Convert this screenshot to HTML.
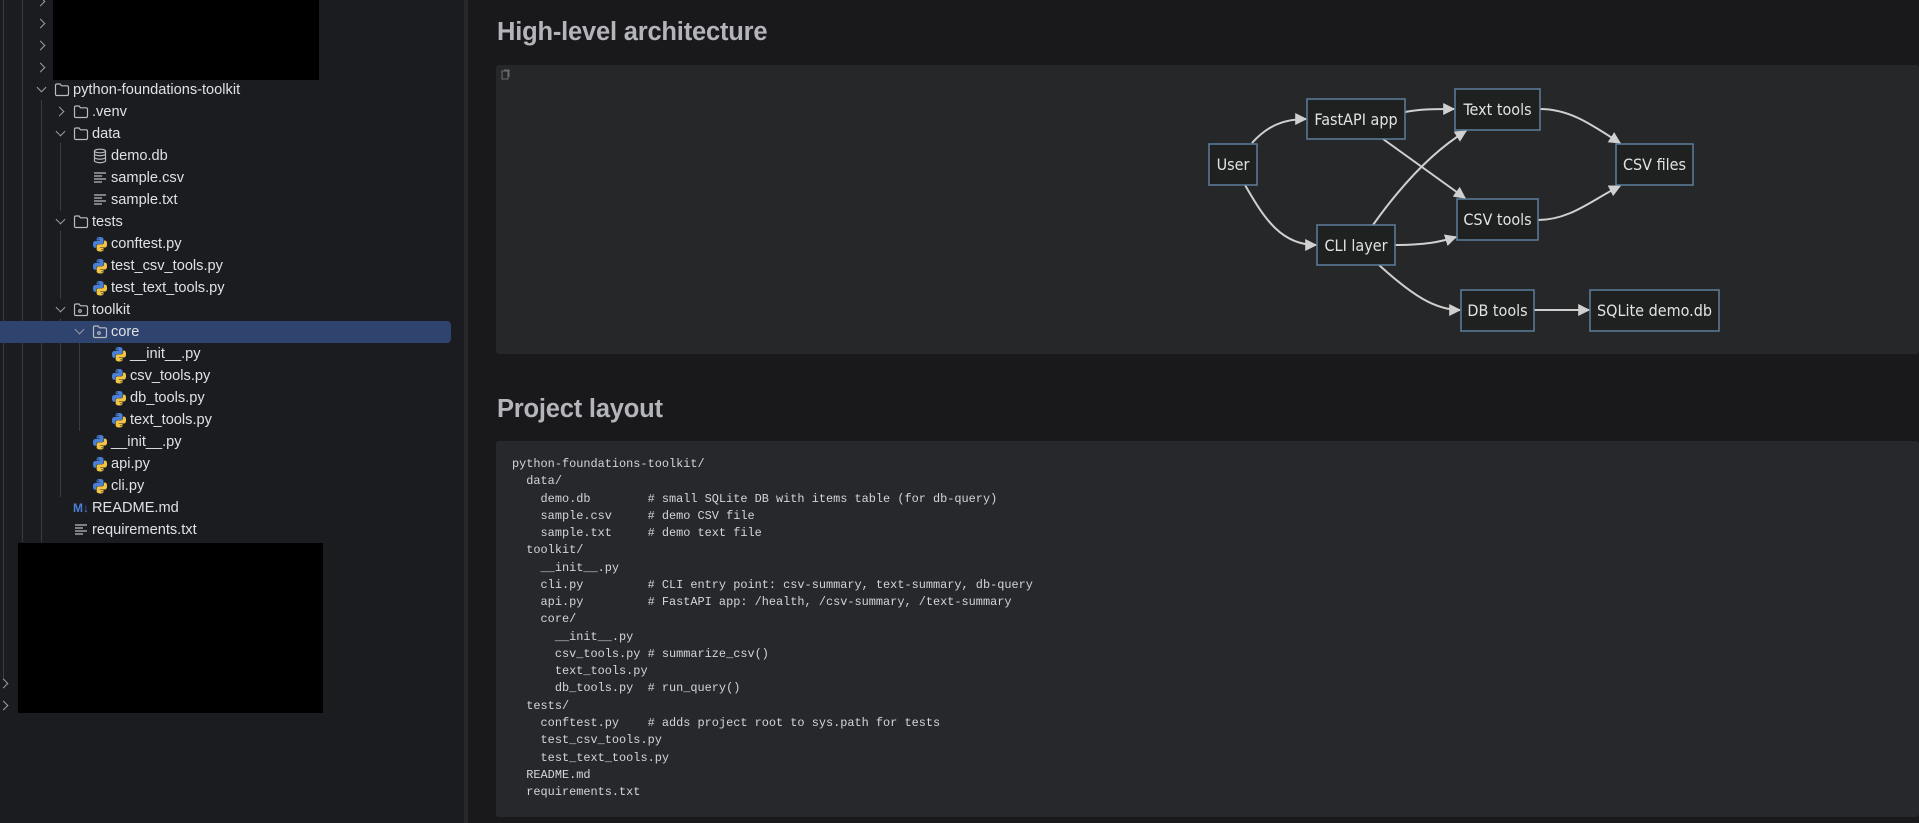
<!DOCTYPE html>
<html><head><meta charset="utf-8"><style>
*{margin:0;padding:0;box-sizing:border-box}
body{width:1919px;height:823px;overflow:hidden;background:#19191c;position:relative;font-family:"Liberation Sans",sans-serif}
#side{position:absolute;left:0;top:0;width:464px;height:823px;background:#1b1c1f}
#sep{position:absolute;left:464px;top:0;width:4px;height:823px;background:#27282c}
.row{position:absolute;height:22px;line-height:22px;font-size:14.6px;color:#dfe1e5;white-space:nowrap}
.vl{position:absolute;width:1px;background:#3a3b3f}
.chev{position:absolute;width:7px;height:7px;border-right:1.5px solid #9a9ca2;border-bottom:1.5px solid #9a9ca2}
.down{transform:rotate(45deg)}
.right{transform:rotate(-45deg)}
.blk{position:absolute;background:#000}
h2{position:absolute;left:497px;font-size:25.5px;font-weight:bold;color:#b4b5ba;letter-spacing:-0.2px}
#diag{position:absolute;left:496px;top:65px;width:1423px;height:289px;background:#262729;border-radius:3px}
#code{position:absolute;left:496px;top:441px;width:1423px;height:376px;background:#27282b;border-radius:3px}
pre{position:absolute;left:16px;top:15px;font-family:"Liberation Mono",monospace;font-size:11.9px;line-height:17.26px;color:#d4d5d8}
</style></head><body>
<div id="side">
<div class="vl" style="left:3px;top:0;height:680px"></div>
<div class="vl" style="left:22px;top:0;height:542px"></div>
<div class="vl" style="left:41px;top:100px;height:442px"></div>
<div class="vl" style="left:60px;top:143px;height:68px"></div>
<div class="vl" style="left:60px;top:231px;height:68px"></div>
<div class="vl" style="left:60px;top:319px;height:178px"></div>
<div class="vl" style="left:79px;top:341px;height:90px"></div>
<div style="position:absolute;left:0;top:321px;width:451px;height:22px;background:#2e436e;border-radius:0 4px 4px 0"></div>
<div class="chev right" style="left:37px;top:-2px"></div>
<div class="chev right" style="left:37px;top:20px"></div>
<div class="chev right" style="left:37px;top:42px"></div>
<div class="chev right" style="left:37px;top:64px"></div>
<div class="chev right" style="left:0px;top:680px"></div>
<div class="chev right" style="left:0px;top:702px"></div>
<div class="blk" style="left:53px;top:0;width:266px;height:80px"></div>
<div class="blk" style="left:18px;top:543px;width:305px;height:170px"></div>
<svg width="464" height="823" style="position:absolute;left:0;top:0" fill="none" stroke="#b9bbc0" stroke-width="1.2">
<defs>
<g id="fold"><path d="M0.5 2.5 Q0.5 1 2 1 H5 L6.5 2.8 H12 Q13.5 2.8 13.5 4.3 V11 Q13.5 12.5 12 12.5 H2 Q0.5 12.5 0.5 11 Z"/></g>
<g id="lines"><path d="M0 2H12M0 5H8M0 8H12M0 11H8" stroke="#b9bbc0"/></g>
<g id="py" stroke="none"><path d="M6.5 0C3.2 0 3.4 1.4 3.4 1.4V3.2H6.6V3.7H2.1S0 3.4 0 6.8 1.8 10 1.8 10H3V8.4S2.9 6.6 4.8 6.6H8S9.7 6.6 9.7 4.9V2S10 0 6.5 0ZM4.7 1A.6.6 0 1 1 4.7 2.2.6.6 0 0 1 4.7 1Z" fill="#4a7fd8"/><path d="M6.6 13.4C9.9 13.4 9.7 12 9.7 12V10.2H6.5V9.7H11S13 10 13 6.6 11.3 3.4 11.3 3.4H10.1V5S10.2 6.8 8.3 6.8H5.1S3.4 6.8 3.4 8.5V11.4S3.1 13.4 6.6 13.4ZM8.4 12.4A.6.6 0 1 1 8.4 11.2.6.6 0 0 1 8.4 12.4Z" fill="#f2c444"/></g>
</defs>
<use href="#fold" x="55" y="83"/>
<use href="#fold" x="74" y="105"/>
<use href="#fold" x="74" y="127"/>
<use href="#fold" x="74" y="215"/>
<use href="#fold" x="74" y="303"/><circle cx="80" cy="311" r="1.3"/>
<use href="#fold" x="93" y="325"/><circle cx="99" cy="333" r="1.3"/>
<g transform="translate(94,149)"><ellipse cx="6" cy="2" rx="5.5" ry="1.8"/><path d="M0.5 2V12.5M11.5 2V12.5M0.5 5.5Q6 8 11.5 5.5M0.5 9Q6 11.5 11.5 9M0.5 12.5Q6 15 11.5 12.5"/></g>
<use href="#lines" x="94" y="171"/>
<use href="#lines" x="94" y="193"/>
<g transform="translate(93,237) scale(1.08)"><use href="#py"/></g>
<g transform="translate(93,259) scale(1.08)"><use href="#py"/></g>
<g transform="translate(93,281) scale(1.08)"><use href="#py"/></g>
<g transform="translate(112,347) scale(1.08)"><use href="#py"/></g>
<g transform="translate(112,369) scale(1.08)"><use href="#py"/></g>
<g transform="translate(112,391) scale(1.08)"><use href="#py"/></g>
<g transform="translate(112,413) scale(1.08)"><use href="#py"/></g>
<g transform="translate(93,435) scale(1.08)"><use href="#py"/></g>
<g transform="translate(93,457) scale(1.08)"><use href="#py"/></g>
<g transform="translate(93,479) scale(1.08)"><use href="#py"/></g>
<use href="#lines" x="75" y="523"/>
</svg>
<div class="chev down" style="left:38px;top:84px"></div>
<div class="chev right" style="left:56px;top:108px"></div>
<div class="chev down" style="left:57px;top:128px"></div>
<div class="chev down" style="left:57px;top:216px"></div>
<div class="chev down" style="left:57px;top:304px"></div>
<div class="chev down" style="left:76px;top:326px"></div>
<div class="row" style="left:73px;top:79px">python-foundations-toolkit</div>
<div class="row" style="left:92px;top:101px">.venv</div>
<div class="row" style="left:92px;top:123px">data</div>
<div class="row" style="left:111px;top:145px">demo.db</div>
<div class="row" style="left:111px;top:167px">sample.csv</div>
<div class="row" style="left:111px;top:189px">sample.txt</div>
<div class="row" style="left:92px;top:211px">tests</div>
<div class="row" style="left:111px;top:233px">conftest.py</div>
<div class="row" style="left:111px;top:255px">test_csv_tools.py</div>
<div class="row" style="left:111px;top:277px">test_text_tools.py</div>
<div class="row" style="left:92px;top:299px">toolkit</div>
<div class="row" style="left:111px;top:321px">core</div>
<div class="row" style="left:130px;top:343px">__init__.py</div>
<div class="row" style="left:130px;top:365px">csv_tools.py</div>
<div class="row" style="left:130px;top:387px">db_tools.py</div>
<div class="row" style="left:130px;top:409px">text_tools.py</div>
<div class="row" style="left:111px;top:431px">__init__.py</div>
<div class="row" style="left:111px;top:453px">api.py</div>
<div class="row" style="left:111px;top:475px">cli.py</div>
<div class="row" style="left:73px;top:497px;font-size:12px;font-weight:bold;color:#4a7fd8">M↓</div>
<div class="row" style="left:92px;top:497px">README.md</div>
<div class="row" style="left:92px;top:519px">requirements.txt</div>
</div>
<div id="sep"></div>
<h2 style="top:18px">High-level architecture</h2>
<div id="diag"></div>
<svg width="1919" height="823" style="position:absolute;left:0;top:0">
<defs><marker id="a" viewBox="0 0 10 10" refX="9" refY="5" markerWidth="6" markerHeight="6" orient="auto"><path d="M0 0L10 5L0 10Z" fill="#d0d0d0"/></marker></defs>
<rect x="502" y="71" width="6" height="8" fill="none" stroke="#6b6c70" stroke-width="1"/><path d="M504 70H509V77" fill="none" stroke="#6b6c70"/>
<g fill="none" stroke="#d0d0d0" stroke-width="2" marker-end="url(#a)">
<path d="M1252 143C1268 125 1285 119 1306 119"/>
<path d="M1245 185C1265 220 1282 245 1316 245"/>
<path d="M1405 112C1420 109 1435 109 1454 109"/>
<path d="M1383 139L1465 198"/>
<path d="M1373 225C1405 180 1435 150 1466 131"/>
<path d="M1395 245C1425 245 1440 242 1456 237"/>
<path d="M1379 265C1412 295 1435 310 1460 310"/>
<path d="M1540 109C1570 109 1592 125 1620 143"/>
<path d="M1538 220C1570 220 1592 200 1620 186"/>
<path d="M1534 310L1589 310"/>
</g>
<g fill="#1f2020" stroke="#5d7f9e" stroke-width="1.5">
<rect x="1209" y="144" width="48" height="41"/>
<rect x="1307" y="99" width="98" height="40"/>
<rect x="1455" y="89" width="85" height="41"/>
<rect x="1616" y="144" width="77" height="41"/>
<rect x="1457" y="199" width="81" height="41"/>
<rect x="1317" y="225" width="78" height="40"/>
<rect x="1461" y="290" width="73" height="41"/>
<rect x="1590" y="290" width="129" height="41"/>
</g>
<g fill="#e2e2e2" font-family="DejaVu Sans Condensed,DejaVu Sans,sans-serif" font-size="16" text-anchor="middle">
<text x="1233" y="170">User</text>
<text x="1356" y="125">FastAPI app</text>
<text x="1497.5" y="115">Text tools</text>
<text x="1654.5" y="170">CSV files</text>
<text x="1497.5" y="225">CSV tools</text>
<text x="1356" y="251">CLI layer</text>
<text x="1497.5" y="316">DB tools</text>
<text x="1654.5" y="316">SQLite demo.db</text>
</g>
</svg>
<h2 style="top:395px">Project layout</h2>
<div id="code"><pre>python-foundations-toolkit/
  data/
    demo.db        # small SQLite DB with items table (for db-query)
    sample.csv     # demo CSV file
    sample.txt     # demo text file
  toolkit/
    __init__.py
    cli.py         # CLI entry point: csv-summary, text-summary, db-query
    api.py         # FastAPI app: /health, /csv-summary, /text-summary
    core/
      __init__.py
      csv_tools.py # summarize_csv()
      text_tools.py
      db_tools.py  # run_query()
  tests/
    conftest.py    # adds project root to sys.path for tests
    test_csv_tools.py
    test_text_tools.py
  README.md
  requirements.txt</pre></div>
</body></html>
